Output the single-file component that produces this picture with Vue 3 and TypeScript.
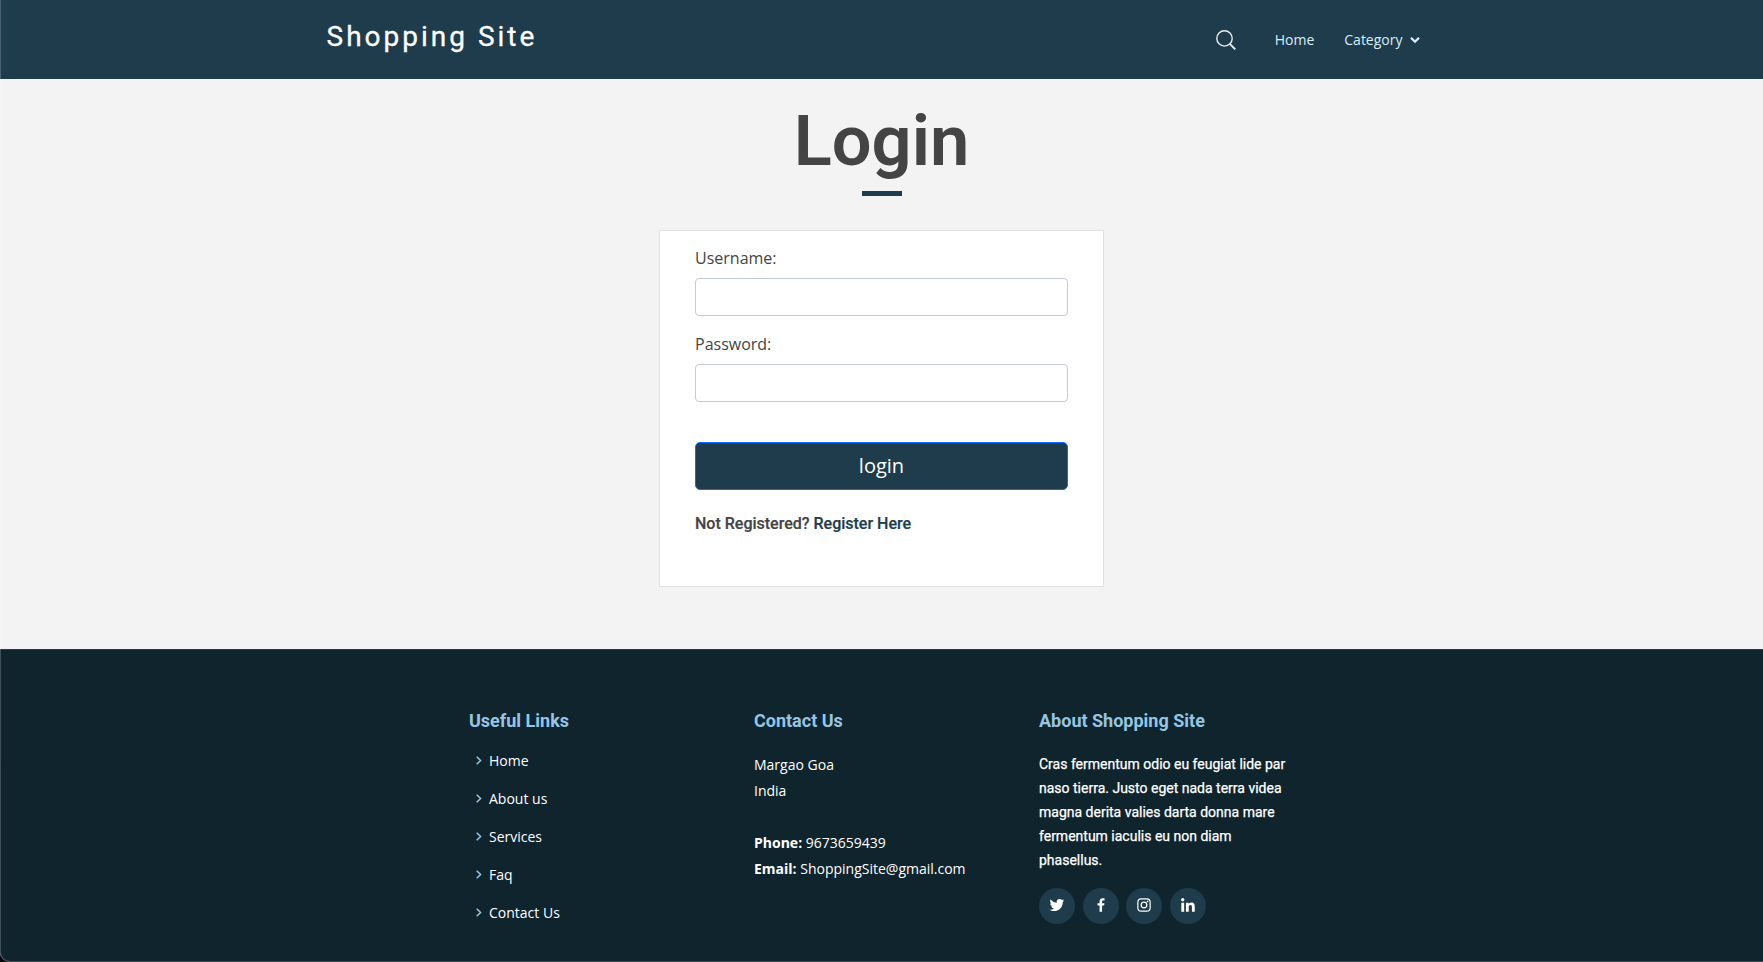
<script setup lang="ts">
import { ref } from 'vue'

const username = ref('')
const password = ref('')
const links: string[] = ['Home', 'About us', 'Services', 'Faq', 'Contact Us']
</script>

<template>
  <div class="page">
    <header class="header">
      <div class="header-inner">
        <a class="logo">Shopping Site</a>
        <nav class="nav">
          <a class="search" aria-label="Search">
            <svg width="20" height="20" viewBox="0 0 20 20" fill="none" stroke="currentColor" stroke-width="1.4">
              <circle cx="8.5" cy="8.4" r="7.7" />
              <path d="M13.8 13.8 19.3 19.4" stroke-width="1.8" />
            </svg>
          </a>
          <a class="nav-home">Home</a>
          <a class="nav-category">
            <span>Category</span>
            <svg width="10" height="8" viewBox="0 0 10 8" fill="none" stroke="currentColor" stroke-width="2.3">
              <path d="M1 1.7 5 5.7 9 1.7" />
            </svg>
          </a>
        </nav>
      </div>
    </header>

    <main class="main">
      <h1 class="title">Login</h1>
      <div class="title-bar"></div>
      <form class="card" @submit.prevent>
        <label for="username">Username:</label>
        <input id="username" v-model="username" type="text" />
        <label for="password">Password:</label>
        <input id="password" v-model="password" type="password" />
        <button type="submit">login</button>
        <p class="register">Not Registered? <a>Register Here</a></p>
      </form>
    </main>

    <footer class="footer">
      <div class="footer-cols">
        <section>
          <h4>Useful Links</h4>
          <ul class="links">
            <li v-for="link in links" :key="link">
              <svg width="6" height="9" viewBox="0 0 6 9" fill="none" stroke="currentColor" stroke-width="1.5">
                <path d="M.7 .7 4.6 4.5 .7 8.3" />
              </svg>
              <a>{{ link }}</a>
            </li>
          </ul>
        </section>
        <section>
          <h4>Contact Us</h4>
          <p class="contact">
            Margao Goa<br />India<br /><br />
            <strong>Phone:</strong> 9673659439<br />
            <strong>Email:</strong> ShoppingSite@gmail.com
          </p>
        </section>
        <section>
          <h4>About Shopping Site</h4>
          <p class="about">Cras fermentum odio eu feugiat lide par naso tierra. Justo eget nada terra videa magna derita valies darta donna mare fermentum iaculis eu non diam phasellus.</p>
          <div class="social">
            <a aria-label="Twitter">
              <svg viewBox="0 0 24 24"><path d="M19.633 7.997c.013.175.013.349.013.523 0 5.325-4.053 11.461-11.46 11.461-2.282 0-4.402-.661-6.186-1.809.324.037.636.05.973.05a8.07 8.07 0 0 0 5.001-1.721 4.036 4.036 0 0 1-3.767-2.793c.249.037.499.062.761.062.361 0 .724-.05 1.061-.137a4.027 4.027 0 0 1-3.23-3.953v-.05c.537.299 1.16.486 1.82.511a4.022 4.022 0 0 1-1.796-3.354c0-.748.199-1.434.548-2.032a11.457 11.457 0 0 0 8.306 4.215c-.062-.3-.1-.611-.1-.923a4.026 4.026 0 0 1 4.028-4.028c1.16 0 2.207.486 2.943 1.272a7.957 7.957 0 0 0 2.556-.973 4.02 4.02 0 0 1-1.771 2.22 8.073 8.073 0 0 0 2.319-.624 8.645 8.645 0 0 1-2.019 2.083z" /></svg>
            </a>
            <a aria-label="Facebook">
              <svg viewBox="0 0 24 24"><path d="M13.397 20.997v-8.196h2.765l.411-3.209h-3.176V7.548c0-.926.258-1.56 1.587-1.56h1.684V3.127A22.336 22.336 0 0 0 14.201 3c-2.444 0-4.122 1.492-4.122 4.231v2.355H7.332v3.209h2.753v8.202h3.312z" /></svg>
            </a>
            <a aria-label="Instagram">
              <svg viewBox="0 0 24 24">
                <rect x="3.8" y="3.8" width="16.4" height="16.4" rx="4.6" fill="none" stroke="currentColor" stroke-width="1.6" />
                <circle cx="12" cy="12" r="3.8" fill="none" stroke="currentColor" stroke-width="1.6" />
                <circle cx="16.8" cy="7.2" r="1.08" />
              </svg>
            </a>
            <a aria-label="LinkedIn">
              <svg viewBox="0 0 24 24">
                <circle cx="4.983" cy="5.009" r="2.188" />
                <path d="M9.237 8.855v12.139h3.769v-6.003c0-1.584.298-3.118 2.262-3.118 1.937 0 1.961 1.811 1.961 3.218v5.904H21v-6.657c0-3.27-.704-5.783-4.526-5.783-1.835 0-3.065 1.007-3.568 1.96h-.051v-1.66H9.237zm-6.142 0H6.87v12.139H3.095z" />
              </svg>
            </a>
          </div>
        </section>
      </div>
    </footer>
  </div>
</template>

<style>
body {
  margin: 0;
  background: #08060f;
}
</style>

<style scoped>
.page {
  position: relative;
  box-sizing: border-box;
  height: 962px;
  overflow: hidden;
  display: flex;
  flex-direction: column;
  border-bottom-left-radius: 10px;
  background: #f3f3f3;
  color: #444;
  font-family: "Open Sans", sans-serif;
  font-size: 16px;
}
.page::after {
  content: "";
  position: absolute;
  inset: 0;
  border-left: 1px solid rgba(255, 255, 255, 0.2);
  border-bottom: 1px solid rgba(255, 255, 255, 0.2);
  border-bottom-left-radius: 10px;
  pointer-events: none;
}
.header {
  flex: none;
  height: 79px;
  background: #1e3c4c;
}
.header-inner {
  width: 1110px;
  margin: 0 auto;
  display: flex;
  justify-content: space-between;
}
.logo {
  margin-top: 17px;
  font: 400 28px/40px Roboto, sans-serif;
  letter-spacing: 3px;
  -webkit-text-stroke: 0.3px #fff;
  color: #fff;
}
.nav {
  display: flex;
  align-items: center;
  height: 79px;
  margin-right: 17px;
  color: #d9edf9;
  font-size: 14px;
}
.search {
  display: flex;
  margin-right: 39px;
  margin-top: 1px;
  color: #eee;
}
.nav-home {
  margin-right: 30px;
}
.nav-category {
  display: flex;
  align-items: center;
  gap: 7px;
}
.nav-category svg {
  margin-top: 1px;
}
.main {
  flex: none;
  height: 570px;
  display: flex;
  flex-direction: column;
  align-items: center;
}
.title {
  margin: 20px 0 0;
  font: 600 70.4px/84px Roboto, sans-serif;
}
.title-bar {
  width: 40px;
  height: 5px;
  margin-top: 8px;
  background: #1e3c4c;
}
.card {
  box-sizing: border-box;
  width: 445px;
  height: 357px;
  margin-top: 34px;
  padding: 15px 35px;
  display: flex;
  flex-direction: column;
  background: #fff;
  border: 1px solid #e2e2e2;
}
.card label {
  line-height: 24px;
  margin-bottom: 8px;
}
.card input {
  box-sizing: border-box;
  height: 38px;
  margin: 0 0 16px;
  padding: 6px 12px;
  border: 1px solid #c5ccd6;
  border-radius: 4px;
  background: #fff;
  font: inherit;
}
.card button {
  height: 48px;
  margin: 24px 0 0;
  border: 1px solid #0d6efd;
  border-radius: 5px;
  background: #1e3c4c;
  color: #fff;
  font: 20px/30px "Open Sans", sans-serif;
}
.register {
  margin: 24px 0 0;
  font: 500 16px/20px Roboto, sans-serif;
  -webkit-text-stroke: 0.2px currentColor;
}
.register a {
  color: #1e3c4c;
}
.footer {
  box-sizing: border-box;
  flex: 1;
  border-top: 1px solid #1e3c4c;
  background: #10242e;
  color: #fff;
  font-size: 14px;
}
.footer-cols {
  width: 825px;
  margin: 0 auto;
  padding-top: 60px;
  display: grid;
  grid-template-columns: 255px 255px 255px;
  column-gap: 30px;
}
h4 {
  margin: 0;
  font: 700 18px/22px Roboto, sans-serif;
  color: #96c5e3;
}
.links {
  margin: 16px 0 0;
  padding: 0;
  list-style: none;
}
.links li {
  height: 24px;
  margin-bottom: 14px;
  padding-left: 7px;
  display: flex;
  align-items: center;
  gap: 7px;
}
.links svg {
  color: #96c5e3;
}
.contact {
  margin: 20px 0 0;
  line-height: 26px;
}
.about {
  margin: 20px 0 0;
  font: 400 14px/24px Roboto, sans-serif;
  -webkit-text-stroke: 0.25px #fff;
}
.social {
  display: flex;
  gap: 7.7px;
  margin-top: 16px;
}
.social a {
  width: 36px;
  height: 36px;
  display: flex;
  justify-content: center;
  padding-top: 8px;
  box-sizing: border-box;
  border-radius: 50%;
  background: #1e3c4c;
}
.social svg {
  width: 18px;
  height: 18px;
  fill: currentColor;
}
</style>
